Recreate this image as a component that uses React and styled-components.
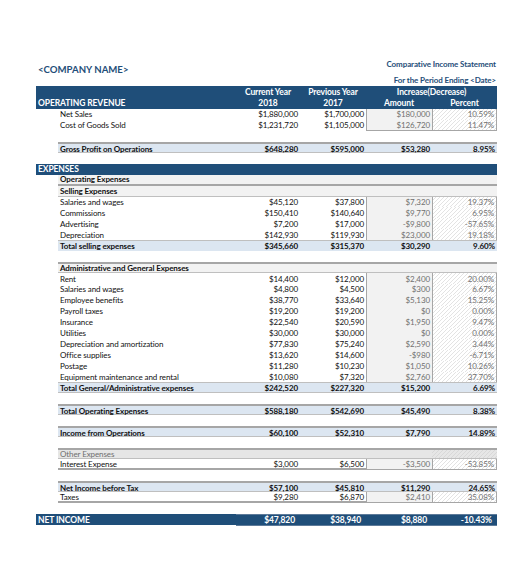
import React from 'react';
import styled, { createGlobalStyle, css } from 'styled-components';

const NAVY = '#1f4e79';
const LINE = '#a6a6a6';
const ROW_H = '10.95px';
const COLS = '178px 64px 66px 66px 65px';

const GlobalStyle = createGlobalStyle`
  html, body { margin: 0; padding: 0; background: #ffffff; }
  body { font-family: Lato, "Open Sans", sans-serif; }
`;

const Page = styled.div`
  width: 528px;
  height: 563px;
  box-sizing: border-box;
  padding-left: 36px;
  font-family: Lato, "Open Sans", sans-serif;
  font-size: 8px;
  color: #111111;
  letter-spacing: -0.1px;
`;

const TitleBar = styled.div`
  width: 461px;
  display: flex;
  justify-content: space-between;
  align-items: flex-start;
  padding-top: 58px;
`;

const Company = styled.div`
  margin-top: 5px;
  padding-left: 2px;
  font-size: 9.6px;
  line-height: 14px;
  font-weight: 700;
  color: ${NAVY};
  letter-spacing: 0;
`;

const Subtitle = styled.div`
  display: flex;
  flex-direction: column;
  align-items: flex-end;
  gap: 4px;
  padding-right: 1px;
  font-size: 8px;
  line-height: 12px;
  font-weight: 700;
  color: ${NAVY};
`;

const HeaderBand = styled.div`
  width: 461px;
  background: ${NAVY};
  color: #ffffff;
  font-weight: 700;
  font-size: 8.5px;
  display: grid;
  grid-template-columns: 22px ${COLS};
  grid-template-rows: 11.5px 11.5px;
`;

const HeadCell = styled.div`
  display: flex;
  align-items: center;
  justify-content: ${(p) => (p.$left ? 'flex-start' : 'center')};
  padding-left: ${(p) => (p.$left ? '2px' : '0')};
  grid-column: ${(p) => p.$span || 'auto'};
  grid-row: ${(p) => p.$row};
  white-space: nowrap;
`;

const Row = styled.div`
  width: 461px;
  height: ${ROW_H};
  display: flex;
`;

const Indent = styled.div`
  width: 22px;
  flex: none;
`;

const borderFor = (w) =>
  w === 'thick' ? `2px solid ${LINE}` : w === 'thin' ? `1px solid #bfbfbf` : 'none';

const Strip = styled.div`
  flex: 1;
  display: grid;
  grid-template-columns: ${COLS};
  box-sizing: border-box;
  background: ${(p) => p.$bg || 'transparent'};
  border-top: ${(p) => borderFor(p.$top)};
  border-bottom: ${(p) => borderFor(p.$bottom)};
  font-weight: ${(p) => (p.$bold ? 700 : 400)};
  color: ${(p) => p.$color || '#111111'};
`;

const Label = styled.div`
  display: flex;
  align-items: center;
  padding-left: 2px;
  white-space: nowrap;
  overflow: hidden;
`;

const Num = styled.div`
  display: flex;
  align-items: center;
  justify-content: flex-end;
  padding-right: ${(p) => p.$pad || '2px'};
  white-space: nowrap;
  box-sizing: border-box;
`;

const hatch = (base, line) => css`
  background: repeating-linear-gradient(
    135deg,
    ${base} 0px,
    ${base} 2.1px,
    ${line} 2.1px,
    ${line} 2.8px
  );
`;

const AmtCell = styled(Num)`
  ${(p) =>
    p.$boxed &&
    css`
      background: #f2f2f2;
      border-left: 1px solid ${LINE};
      color: #707070;
    `}
  ${(p) => p.$boxBottom && css`border-bottom: 1px solid ${LINE};`}
  ${(p) => p.$muted && css`background: #e6e6e6;`}
`;

const PctCell = styled(Num)`
  ${(p) =>
    p.$boxed &&
    css`
      ${hatch('#ffffff', '#e3e3e3')};
      border-left: 1px solid ${LINE};
      border-right: 1px solid ${LINE};
      color: #707070;
    `}
  ${(p) => p.$boxBottom && css`border-bottom: 1px solid ${LINE};`}
  ${(p) => p.$muted && hatch('#e6e6e6', '#d8d8d8')}
`;

const Band = styled.div`
  width: 461px;
  height: ${ROW_H};
  background: ${NAVY};
  color: #ffffff;
  font-weight: 700;
  font-size: 8.5px;
  display: grid;
  grid-template-columns: 200px 64px 66px 66px 65px;
`;

const BandLabel = styled.div`
  display: flex;
  align-items: center;
  padding-left: 2px;
`;

const BandNum = styled(Num)`
  border-top: ${(p) => (p.$lined ? '1px solid #5d7a99' : 'none')};
  border-bottom: ${(p) => (p.$lined ? '1px solid #5d7a99' : 'none')};
`;

const BLUE = '#dce6f1';
const GRAY = '#f2f2f2';

const item = (label, cur, prev, amt, pct, extra = {}) => ({ kind: 'item', label, cur, prev, amt, pct, ...extra });
const total = (label, cur, prev, amt, pct, extra = {}) => ({ kind: 'total', label, cur, prev, amt, pct, ...extra });
const spacer = { kind: 'spacer' };

const rows = [
  item('Net Sales', '$1,880,000', '$1,700,000', '$180,000', '10.59%'),
  item('Cost of Goods Sold', '$1,231,720', '$1,105,000', '$126,720', '11.47%', { boxBottom: true }),
  spacer,
  total('Gross Profit on Operations', '$648,280', '$595,000', '$53,280', '8.95%', { top: 'thick', bottom: 'thin' }),
  spacer,
  { kind: 'band', label: 'EXPENSES' },
  { kind: 'section', label: 'Operating Expenses', bottom: 'thick' },
  { kind: 'section', label: 'Selling Expenses', bottom: 'thin' },
  item('Salaries and wages', '$45,120', '$37,800', '$7,320', '19.37%'),
  item('Commissions', '$150,410', '$140,640', '$9,770', '6.95%'),
  item('Advertising', '$7,200', '$17,000', '-$9,800', '-57.65%'),
  item('Depreciation', '$142,930', '$119,930', '$23,000', '19.18%'),
  total('Total selling expenses', '$345,660', '$315,370', '$30,290', '9.60%', { top: 'thin' }),
  spacer,
  { kind: 'section', label: 'Administrative and General Expenses', top: 'thick', bottom: 'thin' },
  item('Rent', '$14,400', '$12,000', '$2,400', '20.00%'),
  item('Salaries and wages', '$4,800', '$4,500', '$300', '6.67%'),
  item('Employee benefits', '$38,770', '$33,640', '$5,130', '15.25%'),
  item('Payroll taxes', '$19,200', '$19,200', '$0', '0.00%'),
  item('Insurance', '$22,540', '$20,590', '$1,950', '9.47%'),
  item('Utilities', '$30,000', '$30,000', '$0', '0.00%'),
  item('Depreciation and amortization', '$77,830', '$75,240', '$2,590', '3.44%'),
  item('Office supplies', '$13,620', '$14,600', '-$980', '-6.71%'),
  item('Postage', '$11,280', '$10,230', '$1,050', '10.26%'),
  item('Equipment maintenance and rental', '$10,080', '$7,320', '$2,760', '37.70%'),
  total('Total General/Administrative expenses', '$242,520', '$227,320', '$15,200', '6.69%', { top: 'thin', bottom: 'thin' }),
  spacer,
  total('Total Operating Expenses', '$588,180', '$542,690', '$45,490', '8.38%', { top: 'thick', bottom: 'thin' }),
  spacer,
  total('Income from Operations', '$60,100', '$52,310', '$7,790', '14.89%', { top: 'thick', bottom: 'thin' }),
  spacer,
  { kind: 'section', label: 'Other Expenses', top: 'thick', bottom: 'thin', muted: true },
  item('Interest Expense', '$3,000', '$6,500', '-$3,500', '-53.85%', { bottom: 'thick' }),
  spacer,
  total('Net Income before Tax', '$57,100', '$45,810', '$11,290', '24.65%', { top: 'thick', bottom: 'thin' }),
  item('Taxes', '$9,280', '$6,870', '$2,410', '35.08%', { bottom: 'thick' }),
  spacer,
  { kind: 'net', label: 'NET INCOME', cur: '$47,820', prev: '$38,940', amt: '$8,880', pct: '-10.43%' },
];

function TableRow({ r }) {
  if (r.kind === 'spacer') return <Row />;
  if (r.kind === 'band') {
    return (
      <Band>
        <BandLabel>{r.label}</BandLabel>
      </Band>
    );
  }
  if (r.kind === 'net') {
    return (
      <Band>
        <BandLabel>{r.label}</BandLabel>
        <BandNum $pad="5px" $lined>{r.cur}</BandNum>
        <BandNum $pad="5px" $lined>{r.prev}</BandNum>
        <BandNum $pad="5px" $lined>{r.amt}</BandNum>
        <BandNum $pad="5px" $lined>{r.pct}</BandNum>
      </Band>
    );
  }
  if (r.kind === 'section') {
    return (
      <Row>
        <Indent />
        <Strip
          $bg={r.muted ? '#e6e6e6' : GRAY}
          $top={r.top}
          $bottom={r.bottom}
          $bold={!r.muted}
          $color={r.muted ? '#6f6f6f' : '#111111'}
        >
          <Label>{r.label}</Label>
          <Num />
          <Num />
          <AmtCell $muted={r.muted} />
          <PctCell $muted={r.muted} />
        </Strip>
      </Row>
    );
  }
  const isTotal = r.kind === 'total';
  return (
    <Row>
      <Indent />
      <Strip $bg={isTotal ? BLUE : 'transparent'} $top={r.top} $bottom={r.bottom} $bold={isTotal}>
        <Label>{r.label}</Label>
        <Num>{r.cur}</Num>
        <Num>{r.prev}</Num>
        <AmtCell $boxed={!isTotal} $boxBottom={r.boxBottom}>{r.amt}</AmtCell>
        <PctCell $boxed={!isTotal} $boxBottom={r.boxBottom}>{r.pct}</PctCell>
      </Strip>
    </Row>
  );
}

export default function App() {
  return (
    <>
      <GlobalStyle />
      <Page>
        <TitleBar>
          <Company>&lt;COMPANY NAME&gt;</Company>
          <Subtitle>
            <span>Comparative Income Statement</span>
            <span>For the Period Ending &lt;Date&gt;</span>
          </Subtitle>
        </TitleBar>
        <HeaderBand>
          <HeadCell $row="1" $span="3 / 4">Current Year</HeadCell>
          <HeadCell $row="1" $span="4 / 5">Previous Year</HeadCell>
          <HeadCell $row="1" $span="5 / 7">Increase(Decrease)</HeadCell>
          <HeadCell $row="2" $span="1 / 3" $left>OPERATING REVENUE</HeadCell>
          <HeadCell $row="2" $span="3 / 4">2018</HeadCell>
          <HeadCell $row="2" $span="4 / 5">2017</HeadCell>
          <HeadCell $row="2" $span="5 / 6">Amount</HeadCell>
          <HeadCell $row="2" $span="6 / 7">Percent</HeadCell>
        </HeaderBand>
        {rows.map((r, i) => (
          <TableRow key={i} r={r} />
        ))}
      </Page>
    </>
  );
}
